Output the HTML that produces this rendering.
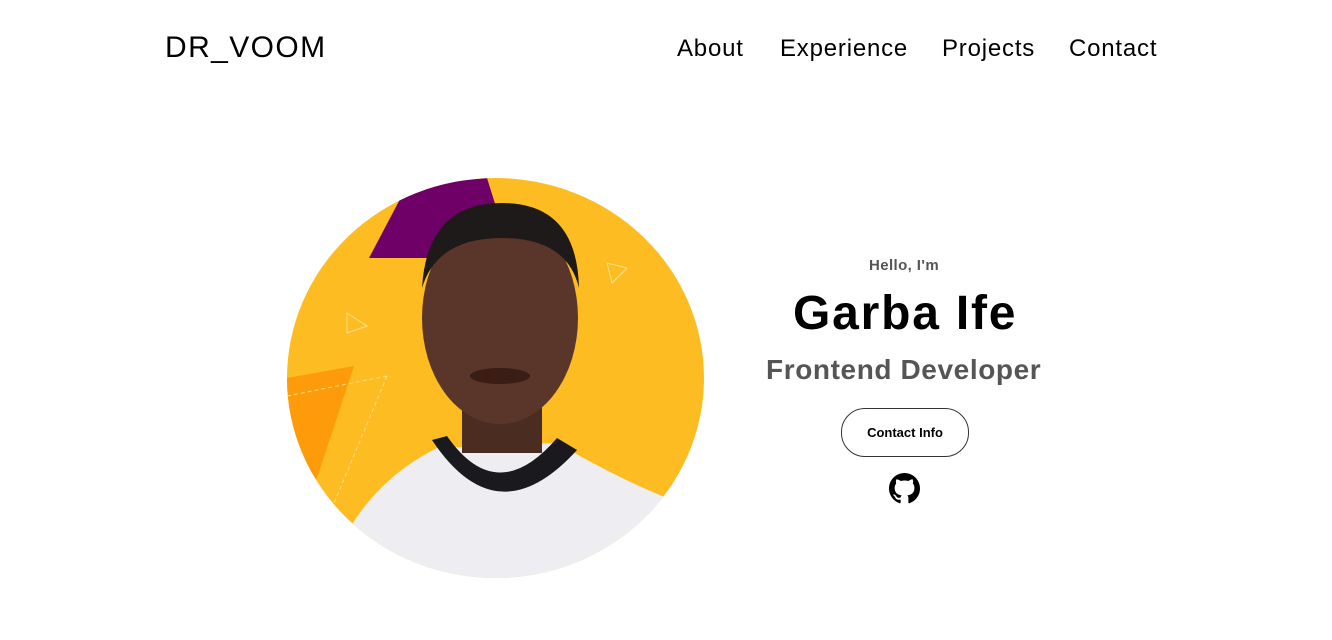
<!DOCTYPE html>
<html><head><meta charset="utf-8"><style>
body{margin:0;width:1332px;height:640px;background:#fff;font-family:"Liberation Sans",sans-serif;position:relative;overflow:hidden}
.logo{position:absolute;left:165px;top:31px;font-size:30px;color:#000;letter-spacing:1.4px}
.nav{position:absolute;top:35px;font-size:24px;color:#000;letter-spacing:0.8px}
</style></head><body>
<div class="logo">DR_VOOM</div>
<div class="nav" style="left:677px">About</div>
<div class="nav" style="left:780px">Experience</div>
<div class="nav" style="left:942px">Projects</div>
<div class="nav" style="left:1069px">Contact</div>

<svg style="position:absolute;left:287px;top:178px" width="417" height="400" viewBox="0 0 417 400">
<defs><clipPath id="c"><ellipse cx="208.5" cy="200" rx="208.5" ry="200"/></clipPath></defs>
<g clip-path="url(#c)">
<rect width="417" height="400" fill="#fdbd22"/>
<polygon points="82,80 120,8 200,0 225,80" fill="#6e0068"/>
<polygon points="0,200 67,188 30,300 0,320" fill="#fd9b0a"/>
<polygon points="320,85 340,90 325,105" fill="none" stroke="#fde08a" stroke-width="1"/>
<polygon points="60,135 80,148 60,155" fill="none" stroke="#fde08a" stroke-width="1"/>
<line x1="0" y1="218" x2="100" y2="198" stroke="#fde08a" stroke-dasharray="4 3"/>
<line x1="100" y1="198" x2="45" y2="330" stroke="#fde08a" stroke-dasharray="4 3"/>
<path d="M40,400 Q70,310 150,270 L270,265 Q330,300 380,320 L417,400 Z" fill="#eeeef2"/>
<rect x="175" y="200" width="80" height="75" fill="#4a2c20"/>
<path d="M145,262 Q210,360 290,272 L270,260 Q210,330 160,258 Z" fill="#1a1a1e"/>
<ellipse cx="213" cy="140" rx="78" ry="106" fill="#5a362a"/>
<path d="M135,110 Q140,25 215,25 Q290,25 292,110 Q280,60 215,60 Q150,60 135,110 Z" fill="#1e1a1a"/>
<ellipse cx="213" cy="198" rx="30" ry="8" fill="#3a1e16"/>
</g></svg>

<div style="position:absolute;left:869px;top:257px;font-size:15px;color:#555;font-weight:bold;letter-spacing:0.4px">Hello, I'm</div>
<div style="position:absolute;left:793px;top:286px;font-size:48px;font-weight:bold;color:#000;letter-spacing:1.8px">Garba Ife</div>
<div style="position:absolute;left:766px;top:354px;font-size:28px;font-weight:bold;color:#555;letter-spacing:0.6px">Frontend Developer</div>
<div style="position:absolute;left:841px;top:408px;width:128px;height:49px;border:1px solid #333;border-radius:24px;box-sizing:border-box;text-align:center;line-height:47px;font-size:13px;color:#000;font-weight:bold">Contact Info</div>
<svg style="position:absolute;left:889px;top:473px" width="31" height="31" viewBox="0 0 16 16"><path fill="#000" d="M8 0C3.58 0 0 3.58 0 8c0 3.54 2.29 6.53 5.47 7.59.4.07.55-.17.55-.38 0-.19-.01-.82-.01-1.49-2.01.37-2.53-.49-2.69-.94-.09-.23-.48-.94-.82-1.13-.28-.15-.68-.52-.01-.53.63-.01 1.08.58 1.23.82.72 1.21 1.87.87 2.33.66.07-.52.28-.87.51-1.07-1.78-.2-3.64-.89-3.64-3.95 0-.87.31-1.59.82-2.15-.08-.2-.36-1.02.08-2.12 0 0 .67-.21 2.2.82.64-.18 1.32-.27 2-.27.68 0 1.36.09 2 .27 1.53-1.04 2.2-.82 2.2-.82.44 1.1.16 1.92.08 2.12.51.56.82 1.27.82 2.15 0 3.07-1.87 3.75-3.65 3.95.29.25.54.73.54 1.48 0 1.07-.01 1.93-.01 2.2 0 .21.15.46.55.38A8.013 8.013 0 0016 8c0-4.42-3.58-8-8-8z"/></svg>
</body></html>
